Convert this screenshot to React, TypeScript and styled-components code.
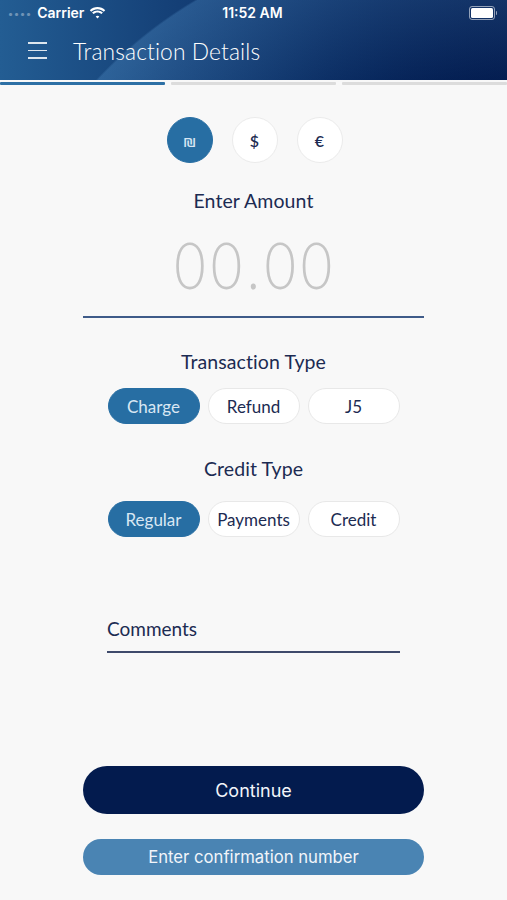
import React, { useState } from "react"
import styled, { createGlobalStyle } from "styled-components"

const GlobalStyle = createGlobalStyle`
  html, body {
    margin: 0;
    padding: 0;
    background: #f8f8f8;
  }
  body {
    font-family: Lato, "Open Sans", sans-serif;
  }
`

const Screen = styled.div`
  width: 507px;
  height: 900px;
  display: flex;
  flex-direction: column;
  background: #f8f8f8;
  overflow: hidden;
`

const Header = styled.header`
  height: 80px;
  display: flex;
  flex-direction: column;
  color: #fff;
  background:
    radial-gradient(
      circle 442px at 420px 380px,
      rgba(80, 140, 195, 0) 300px,
      rgba(80, 140, 195, 0.35) 440px,
      rgba(0, 0, 0, 0) 442px
    ),
    linear-gradient(90deg, #235d93 0%, #143f76 35%, #0a2c62 65%, #021a4d 100%);
`

const StatusBar = styled.div`
  height: 25px;
  display: grid;
  grid-template-columns: 1fr auto 1fr;
  align-items: center;
  padding: 0 10px 0 8px;
  font-family: Inter, "Liberation Sans", sans-serif;
  font-size: 14px;
  font-weight: 600;
`

const Carrier = styled.div`
  display: flex;
  align-items: center;
  gap: 5px;
`

const Dots = styled.span`
  letter-spacing: 1px;
  opacity: 0.35;
  font-size: 10px;
`

const Clock = styled.div`
  text-align: center;
`

const Battery = styled.div`
  justify-self: end;
  display: flex;
  align-items: center;
`

const BatteryBody = styled.div`
  width: 22px;
  height: 10px;
  border: 1px solid rgba(255, 255, 255, 0.55);
  border-radius: 3px;
  padding: 1px;
  display: flex;
`

const BatteryFill = styled.div`
  flex: 1;
  background: #fff;
  border-radius: 1.5px;
`

const BatteryTip = styled.div`
  width: 1.5px;
  height: 4px;
  margin-left: 1px;
  background: rgba(255, 255, 255, 0.55);
  border-radius: 0 1px 1px 0;
`

const TitleBar = styled.div`
  flex: 1;
  display: flex;
  align-items: center;
  gap: 26px;
  padding: 0 0 4px 28px;
`

const Burger = styled.div`
  width: 19px;
  display: flex;
  flex-direction: column;
  gap: 6px;
`

const BurgerLine = styled.span`
  height: 1.5px;
  background: rgba(255, 255, 255, 0.85);
`

const Title = styled.h1`
  margin: 0;
  font-size: 22.8px;
  font-weight: 300;
  letter-spacing: 0.1px;
`

const Progress = styled.div`
  display: grid;
  grid-template-columns: repeat(3, 1fr);
  gap: 6px;
  padding: 2px 0 0;
`

const Segment = styled.div<{ $active: boolean }>`
  height: 3px;
  background: ${({ $active }) => ($active ? "#2d70a5" : "#dcdcdc")};
  border-radius: 1px;
`

const Content = styled.main`
  flex: 1;
  display: flex;
  flex-direction: column;
  align-items: center;
  padding-top: 32px;
`

const CurrencyRow = styled.div`
  display: flex;
  gap: 19px;
  margin-left: 2px;
`

const CurrencyButton = styled.button<{ $active: boolean }>`
  width: 46px;
  height: 46px;
  border-radius: 50%;
  border: 1px solid ${({ $active }) => ($active ? "#276ea3" : "#ebebeb")};
  background: ${({ $active }) => ($active ? "#276ea3" : "#fff")};
  color: ${({ $active }) => ($active ? "#d7e6f3" : "#1c2b52")};
  font-family: Lato, sans-serif;
  font-size: 16px;
  font-weight: 600;
  display: flex;
  align-items: center;
  justify-content: center;
  padding: 0;
  cursor: pointer;
`

const Label = styled.div<{ $top: number }>`
  margin-top: ${({ $top }) => $top}px;
  font-size: 19.5px;
  color: #1c2b52;
  letter-spacing: 0.1px;
`

const Amount = styled.div`
  margin-top: 12px;
  width: 341px;
  text-align: center;
  font-size: 66px;
  line-height: 80px;
  font-weight: 300;
  color: #c6c6c6;
  border-bottom: 2px solid #3f5b89;
  padding-bottom: 12px;
`

// the digits in the app are a narrower face than Lato, so squeeze them
const AmountDigits = styled.span`
  display: inline-block;
  letter-spacing: 6px;
  padding-left: 6px;
  transform: scaleX(0.82);
`

const PillRow = styled.div<{ $top: number }>`
  margin-top: ${({ $top }) => $top}px;
  display: grid;
  grid-template-columns: repeat(3, 92px);
  gap: 8px;
`

const Pill = styled.button<{ $active: boolean }>`
  height: 36px;
  border-radius: 18px;
  border: 1px solid ${({ $active }) => ($active ? "#276ea3" : "#e8e8e8")};
  background: ${({ $active }) => ($active ? "#276ea3" : "#fff")};
  color: ${({ $active }) => ($active ? "#d9e7f3" : "#1c2b52")};
  font-family: Lato, sans-serif;
  font-size: 17px;
  padding: 0;
  cursor: pointer;
`

const CommentsField = styled.div`
  margin-top: 80px;
  width: 293px;
  padding-bottom: 11px;
  border-bottom: 2px solid #3f4a6b;
  font-size: 19px;
  color: #1c2b52;
`

const Actions = styled.div`
  margin-top: auto;
  padding-bottom: 25px;
  width: 341px;
  display: flex;
  flex-direction: column;
  gap: 25px;
`

const ActionButton = styled.button<{ $primary?: boolean }>`
  height: ${({ $primary }) => ($primary ? 48 : 36)}px;
  border-radius: 24px;
  border: none;
  background: ${({ $primary }) => ($primary ? "#031b4e" : "#4a84b3")};
  color: #f2f5fa;
  font-family: Inter, "Liberation Sans", sans-serif;
  font-size: ${({ $primary }) => ($primary ? 18 : 16.7)}px;
  cursor: pointer;
`

const Wifi = () => (
  <svg width="17" height="12" viewBox="0 0 17 12" fill="#fff">
    <path d="M8.5 2.2c2.4 0 4.6.9 6.3 2.5l1.4-1.5C14.1 1.2 11.4.1 8.5.1S2.9 1.2.8 3.2l1.4 1.5c1.7-1.6 3.9-2.5 6.3-2.5z" />
    <path d="M8.5 5.5c1.5 0 2.9.6 4 1.6l1.4-1.5C12.4 4.2 10.5 3.4 8.5 3.4S4.6 4.2 3.1 5.6l1.4 1.5c1.1-1 2.5-1.6 4-1.6z" />
    <path d="M8.5 8.7c.7 0 1.3.3 1.8.7L8.5 11.4 6.7 9.4c.5-.4 1.1-.7 1.8-.7z" />
  </svg>
)

const currencies = ["₪", "$", "€"]
const transactionTypes = ["Charge", "Refund", "J5"]
const creditTypes = ["Regular", "Payments", "Credit"]

const App = () => {
  const [currency, setCurrency] = useState(0)
  const [txType, setTxType] = useState(0)
  const [creditType, setCreditType] = useState(0)

  return (
    <Screen>
      <GlobalStyle />
      <Header>
        <StatusBar>
          <Carrier>
            <Dots>••••</Dots>
            <span>Carrier</span>
            <Wifi />
          </Carrier>
          <Clock>11:52 AM</Clock>
          <Battery>
            <BatteryBody>
              <BatteryFill />
            </BatteryBody>
            <BatteryTip />
          </Battery>
        </StatusBar>
        <TitleBar>
          <Burger>
            <BurgerLine />
            <BurgerLine />
            <BurgerLine />
          </Burger>
          <Title>Transaction Details</Title>
        </TitleBar>
      </Header>
      <Progress>
        {[0, 1, 2].map((i) => (
          <Segment key={i} $active={i === 0} />
        ))}
      </Progress>
      <Content>
        <CurrencyRow>
          {currencies.map((c, i) => (
            <CurrencyButton
              key={c}
              $active={i === currency}
              onClick={() => setCurrency(i)}
            >
              {c}
            </CurrencyButton>
          ))}
        </CurrencyRow>
        <Label $top={26}>Enter Amount</Label>
        <Amount>
          <AmountDigits>00.00</AmountDigits>
        </Amount>
        <Label $top={32}>Transaction Type</Label>
        <PillRow $top={15}>
          {transactionTypes.map((t, i) => (
            <Pill key={t} $active={i === txType} onClick={() => setTxType(i)}>
              {t}
            </Pill>
          ))}
        </PillRow>
        <Label $top={33}>Credit Type</Label>
        <PillRow $top={21}>
          {creditTypes.map((t, i) => (
            <Pill
              key={t}
              $active={i === creditType}
              onClick={() => setCreditType(i)}
            >
              {t}
            </Pill>
          ))}
        </PillRow>
        <CommentsField>Comments</CommentsField>
        <Actions>
          <ActionButton $primary>Continue</ActionButton>
          <ActionButton>Enter confirmation number</ActionButton>
        </Actions>
      </Content>
    </Screen>
  )
}

export default App
